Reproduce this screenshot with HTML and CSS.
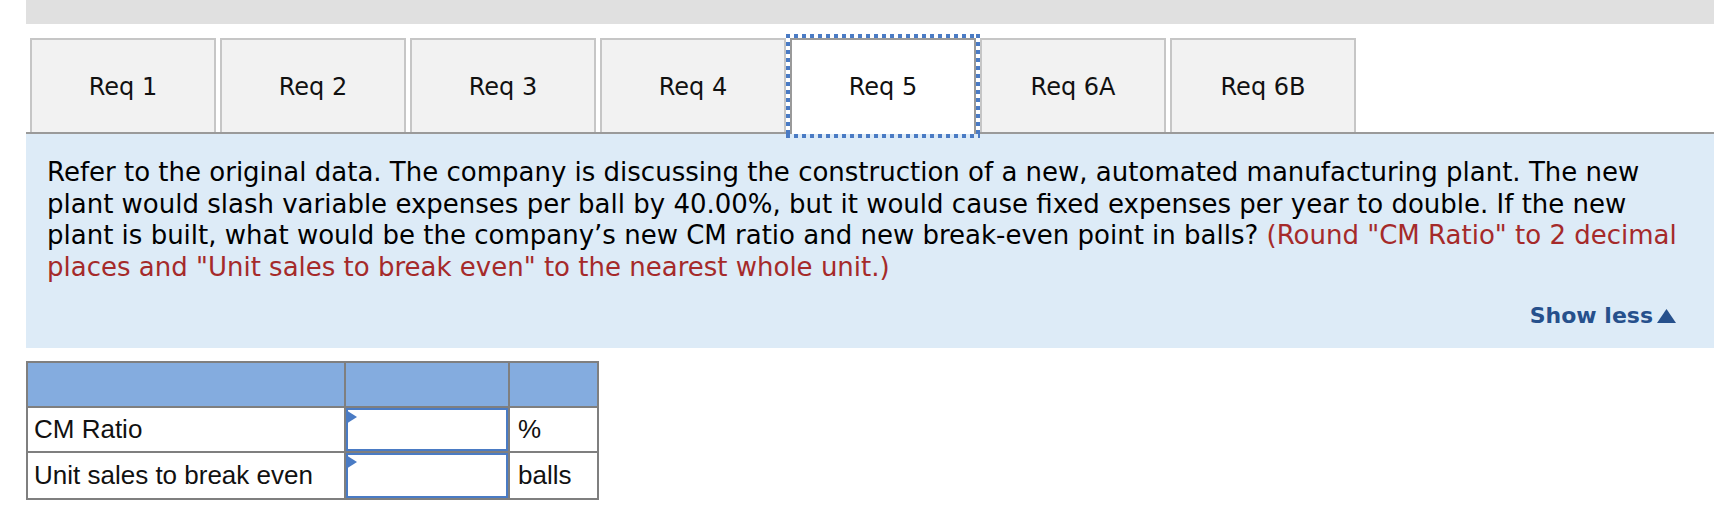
FILE: index.html
```html
<!DOCTYPE html>
<html lang="en">
<head>
<meta charset="utf-8">
<title>Req 5</title>
<link rel="stylesheet" href="styles.css">
</head>
<body>
<div class="page">
  <div class="topbar"></div>
  <div class="tabs">
    <div class="tab">Req 1</div>
    <div class="tab">Req 2</div>
    <div class="tab">Req 3</div>
    <div class="tab">Req 4</div>
    <div class="tab active">Req 5</div>
    <div class="tab">Req 6A</div>
    <div class="tab">Req 6B</div>
  </div>
  <div class="panel">
    <p class="question">Refer to the original data. The company is discussing the construction of a new, automated manufacturing plant. The new plant would slash variable expenses per ball by 40.00%, but it would cause fixed expenses per year to double. If the new plant is built, what would be the company’s new CM ratio and new break-even point in balls? <span class="hint">(Round "CM Ratio" to 2 decimal places and "Unit sales to break even" to the nearest whole unit.)</span></p>
    <div class="showless">Show less<svg class="tri" width="19" height="14" viewBox="0 0 19 14"><polygon points="9.5,0 19,14 0,14" fill="#26508c"/></svg></div>
  </div>
  <table class="answer">
    <colgroup>
      <col class="c1">
      <col class="c2">
      <col class="c3">
    </colgroup>
    <tr class="head"><th></th><th></th><th></th></tr>
    <tr class="row1"><td class="label">CM Ratio</td><td class="inp"><div class="field"></div></td><td class="unit">%</td></tr>
    <tr class="row2"><td class="label">Unit sales to break even</td><td class="inp"><div class="field"></div></td><td class="unit">balls</td></tr>
  </table>
</div>
</body>
</html>
```
FILE: styles.css
```css
html, body {
  margin: 0;
  padding: 0;
  background: #ffffff;
}
body {
  font-family: "DejaVu Sans", Verdana, sans-serif;
  color: #000;
}
.page {
  padding-left: 26px;
}
.topbar {
  height: 24px;
  background: #e0e0e0;
}
.tabs {
  display: flex;
  gap: 4px;
  margin-top: 14px;
  padding-left: 4px;
  height: 94px;
  align-items: flex-start;
}
.tab {
  box-sizing: border-box;
  width: 186px;
  height: 94px;
  border: 2px solid #c6c6c6;
  border-bottom: none;
  background: #f2f2f2;
  display: flex;
  justify-content: center;
  align-items: center;
  padding-top: 1px;
  font-size: 24px;
  color: #111;
}
.tab.active {
  position: relative;
  z-index: 1;
  height: 96px;
  padding-bottom: 2px;
  background: #ffffff;
  border-color: #9a9a9a;
}
.tab.active::after {
  content: "";
  position: absolute;
  left: -6px;
  right: -6px;
  top: -6px;
  bottom: -4px;
  background:
    repeating-linear-gradient(90deg, #4a7bc4 0 4px, transparent 4px 8px) left top / 100% 4px no-repeat,
    repeating-linear-gradient(90deg, #4a7bc4 0 4px, transparent 4px 8px) left bottom / 100% 4px no-repeat,
    repeating-linear-gradient(180deg, #4a7bc4 0 4px, transparent 4px 8px) left top / 4px 100% no-repeat,
    repeating-linear-gradient(180deg, #4a7bc4 0 4px, transparent 4px 8px) right top / 4px 100% no-repeat;
}
.panel {
  border-top: 2px solid #9a9a9a;
  background: #ddebf7;
  padding: 23px 26px 19px 21px;
}
.question {
  margin: 0;
  font-size: 26px;
  line-height: 31.6px;
  color: #000;
}
.hint {
  color: #a52a2a;
}
.showless {
  margin-top: 20px;
  margin-right: 12px;
  display: flex;
  justify-content: flex-end;
  align-items: baseline;
  font-weight: bold;
  font-size: 22px;
  line-height: 26px;
  color: #26508c;
}
.tri {
  margin-left: 4px;
  align-self: baseline;
}
.answer {
  margin-top: 13px;
  table-layout: fixed;
  width: 573px;
  border-collapse: separate;
  border-spacing: 0;
  border-top: 2px solid #7f7f7f;
  border-left: 2px solid #7f7f7f;
  font-family: "Liberation Sans", Arial, sans-serif;
  font-size: 26px;
  color: #111;
}
.c1 { width: 318px; }
.c2 { width: 164px; }
.c3 { width: 89px; }
.answer th,
.answer td {
  border-right: 2px solid #7f7f7f;
  border-bottom: 2px solid #7f7f7f;
  padding: 0;
  vertical-align: middle;
  text-align: left;
  font-weight: normal;
}
.answer th {
  background: #84acdf;
}
.head { height: 45px; }
.row1 { height: 45px; }
.row2 { height: 47px; }
.answer .label { padding-left: 6px; }
.answer .unit { padding-left: 8px; }
.field {
  position: relative;
  box-sizing: border-box;
  height: 43px;
  border: 2px solid #4a7bc4;
  background: #fff;
}
.row2 .field { height: 45px; }
.field::before {
  content: "";
  position: absolute;
  left: -2px;
  top: 0;
  border-left: 11px solid #4a7bc4;
  border-top: 7px solid transparent;
  border-bottom: 7px solid transparent;
}
```
